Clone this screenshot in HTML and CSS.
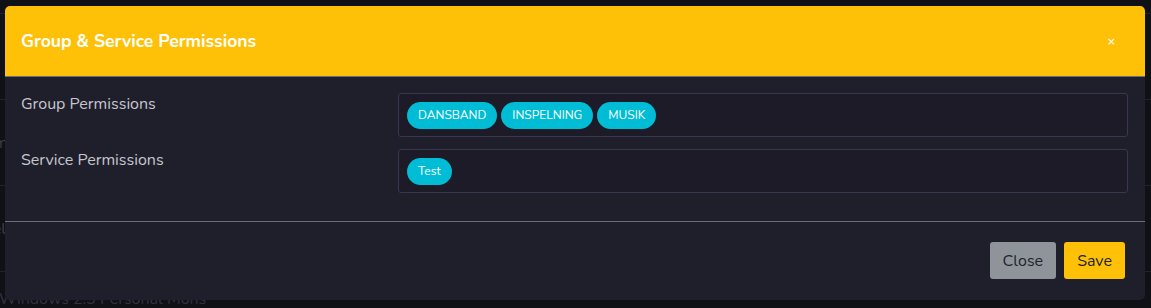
FILE: index.html
```html
<!DOCTYPE html>
<html>
<head>
<meta charset="utf-8">
<link rel="stylesheet" href="styles.css">
</head>
<body>
<div class="backdrop">
  <div class="bg-row first"></div>
  <div class="bg-row"><span class="bg-text">Edit</span></div>
  <div class="bg-row"><span class="bg-text">Permissions</span></div>
  <div class="bg-row"><span class="bg-text">Shield</span></div>
  <div class="bg-row last"><span class="bg-text low">Windows 2.3 Personal Mons</span></div>
</div>
<div class="modal">
  <div class="modal-header">
    <h5 class="modal-title">Group &amp; Service Permissions</h5>
    <button class="btn-x" type="button">×</button>
  </div>
  <div class="modal-body">
    <div class="form-row">
      <label class="form-label">Group Permissions</label>
      <div class="tag-box">
        <span class="tag">DANSBAND</span>
        <span class="tag">INSPELNING</span>
        <span class="tag">MUSIK</span>
      </div>
    </div>
    <div class="form-row">
      <label class="form-label">Service Permissions</label>
      <div class="tag-box">
        <span class="tag">Test</span>
      </div>
    </div>
  </div>
  <div class="modal-footer">
    <button class="btn btn-close" type="button">Close</button>
    <button class="btn btn-save" type="button">Save</button>
  </div>
</div>
</body>
</html>
```
FILE: styles.css
```css
* { box-sizing: border-box; }
html, body { margin: 0; padding: 0; }
body {
  width: 1151px;
  height: 308px;
  overflow: hidden;
  background: #101017;
  font-family: "Nunito", "Lato", "Noto Sans", sans-serif;
  position: relative;
}
.backdrop {
  display: flex;
  flex-direction: column;
  height: 308px;
  overflow: hidden;
}
.bg-row {
  flex: none;
  height: 86px;
  border-bottom: 1px solid #22222c;
  display: flex;
  align-items: center;
  color: #3e3e4a;
  font-size: 16px;
}
.bg-row.first { height: 14px; }
.bg-row.last { height: 35px; border-bottom: 0; align-items: flex-start; padding-top: 16px; }
.bg-text { margin-left: -30px; white-space: nowrap; }
.bg-text.low { margin-left: -1px; color: #33333e; }
.modal {
  position: absolute;
  left: 5px;
  top: 6px;
  width: 1140px;
  height: 294px;
  background: #1f1f2b;
  border-radius: 5px;
  overflow: hidden;
  display: flex;
  flex-direction: column;
}
.modal-header {
  height: 71px;
  background: #ffc107;
  border-bottom: 1px solid #6c6c78;
  display: flex;
  align-items: center;
  justify-content: space-between;
  padding: 0 29px 0 16px;
}
.modal-title {
  margin: 0;
  font-size: 17.6px;
  font-weight: 700;
  color: #ffffff;
}
.btn-x {
  border: 0;
  background: transparent;
  color: #ffffff;
  font-size: 11px;
  font-weight: 400;
  padding: 0;
  line-height: 1;
  font-family: "DejaVu Sans", sans-serif;
}
.modal-body {
  padding: 16px 17px 16px 16px;
  border-bottom: 1px solid #6c6c78;
}
.form-row {
  display: grid;
  grid-template-columns: 377px 1fr;
  margin-bottom: 12px;
}
.form-label {
  color: #c6c6cf;
  font-size: 16px;
  line-height: 22px;
}
.tag-box {
  height: 44px;
  border: 1px solid #3a3650;
  border-radius: 3px;
  background: #1c1b27;
  display: flex;
  align-items: center;
  gap: 4px;
  padding: 0 8px;
}
.tag {
  height: 27px;
  border-radius: 14px;
  background: #00bcd4;
  color: #ffffff;
  font-size: 12px;
  line-height: 27px;
  padding: 0 11px;
}
.modal-footer {
  flex: 1;
  display: flex;
  justify-content: flex-end;
  align-items: flex-start;
  gap: 8px;
  padding: 20px 20px 0 0;
}
.btn {
  height: 37px;
  border: 0;
  border-radius: 3px;
  font-family: inherit;
  font-size: 16px;
  color: #212529;
  padding: 0 13px;
}
.btn-close { background: #8e949a; }
.btn-save { background: #ffc107; }
```
